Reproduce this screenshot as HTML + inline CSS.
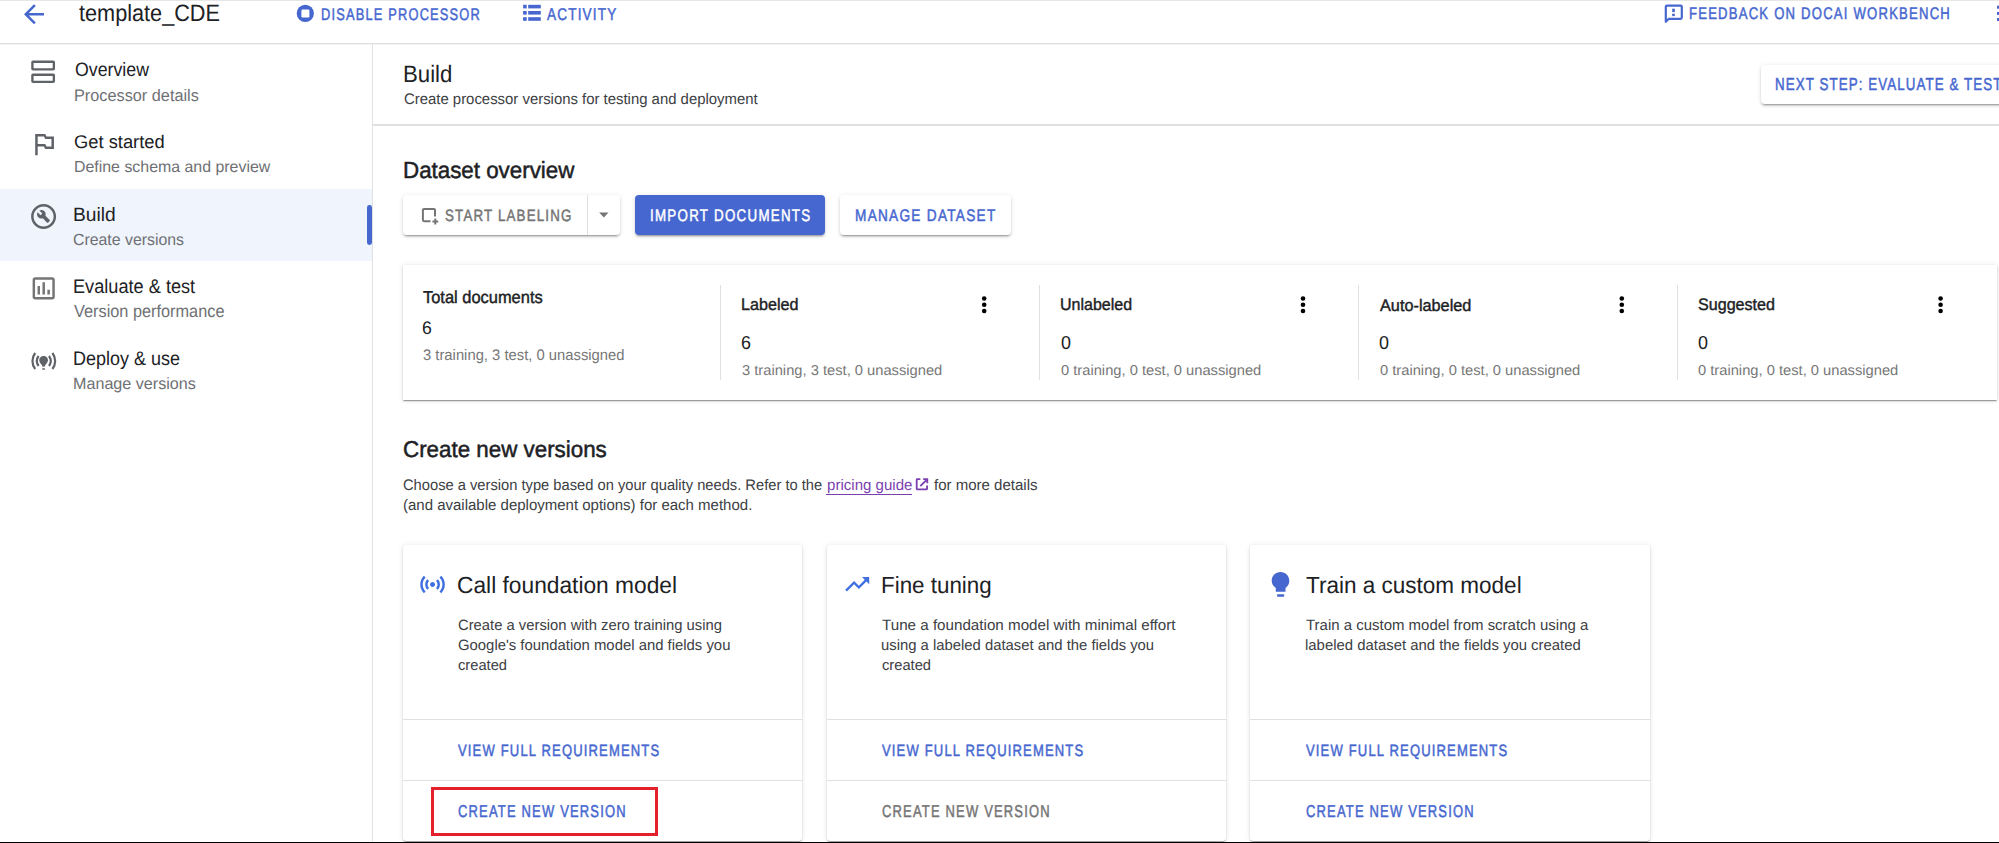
<!DOCTYPE html>
<html><head><meta charset="utf-8">
<style>
html,body{margin:0;padding:0;background:#fff;}
body{width:1999px;height:843px;overflow:hidden;position:relative;font-family:"Liberation Sans",sans-serif;}
.a{position:absolute;}
.t{position:absolute;white-space:nowrap;line-height:1;transform-origin:0 0;text-rendering:geometricPrecision;font-family:"Liberation Sans",sans-serif;}
.sh{box-shadow:0 2px 1px -1px rgba(0,0,0,.2),0 1px 1px 0 rgba(0,0,0,.14),0 1px 3px 0 rgba(0,0,0,.12),0 0 6px 0 rgba(0,0,0,.07);background:#fff;}
.bt{box-shadow:0 3px 1px -2px rgba(0,0,0,.2),0 2px 2px 0 rgba(0,0,0,.14),0 1px 5px 0 rgba(0,0,0,.12);background:#fff;}
svg{position:absolute;overflow:visible;}
</style></head><body>
<!-- header lines -->
<div class="a" style="left:0;top:0;width:1999px;height:1px;background:#e6e6e6"></div>
<div class="a" style="left:0;top:43px;width:1999px;height:1px;background:#dfdfdf"></div>
<div class="a" style="left:0;top:44px;width:1999px;height:1px;background:#f3f3f3"></div>
<!-- sidebar -->
<div class="a" style="left:0;top:189px;width:372px;height:72px;background:#f0f4fd"></div>
<div class="a" style="left:367px;top:205.4px;width:4.8px;height:39.8px;background:#4667d0;border-radius:2.4px"></div>
<div class="a" style="left:372px;top:44px;width:1px;height:799px;background:#e2e2e2"></div>
<div class="a" style="left:373px;top:124px;width:1626px;height:2px;background:#e0e0e0"></div>
<!-- next step button -->
<div class="a bt" style="left:1761px;top:65px;width:260px;height:39px;border-radius:4px"></div>
<!-- dataset buttons -->
<div class="a bt" style="left:403px;top:195px;width:217px;height:40px;border-radius:4px"></div>
<div class="a" style="left:587px;top:195px;width:1px;height:40px;background:#e0e0e0"></div>
<div class="a bt" style="left:635px;top:195px;width:190px;height:40px;border-radius:4px;background:#4667d0"></div>
<div class="a bt" style="left:840px;top:195px;width:171px;height:40px;border-radius:4px"></div>
<!-- stats card -->
<div class="a sh" style="left:403px;top:265px;width:1594px;height:135px;border-radius:0"></div>
<div class="a" style="left:720px;top:285px;width:1px;height:95px;background:#e0e0e0"></div>
<div class="a" style="left:1039px;top:285px;width:1px;height:95px;background:#e0e0e0"></div>
<div class="a" style="left:1358px;top:285px;width:1px;height:95px;background:#e0e0e0"></div>
<div class="a" style="left:1677px;top:285px;width:1px;height:95px;background:#e0e0e0"></div>
<!-- version cards -->
<div class="a sh" style="left:403px;top:545px;width:399px;height:296px;border-radius:3px"></div>
<div class="a sh" style="left:827px;top:545px;width:399px;height:296px;border-radius:3px"></div>
<div class="a sh" style="left:1250px;top:545px;width:400px;height:296px;border-radius:3px"></div>
<div class="a" style="left:403px;top:719px;width:399px;height:1px;background:#e0e0e0"></div>
<div class="a" style="left:403px;top:780px;width:399px;height:1px;background:#e0e0e0"></div>
<div class="a" style="left:827px;top:719px;width:399px;height:1px;background:#e0e0e0"></div>
<div class="a" style="left:827px;top:780px;width:399px;height:1px;background:#e0e0e0"></div>
<div class="a" style="left:1250px;top:719px;width:400px;height:1px;background:#e0e0e0"></div>
<div class="a" style="left:1250px;top:780px;width:400px;height:1px;background:#e0e0e0"></div>
<!-- red box -->
<div class="a" style="left:431px;top:787px;width:221px;height:43px;border:3px solid #e3202c"></div>
<!-- bottom black line -->
<div class="a" style="left:0;top:842px;width:1999px;height:1px;background:#000"></div>

<!-- ICONS -->
<svg width="1999" height="843" style="left:0;top:0" viewBox="0 0 1999 843">
  <!-- back arrow -->
  <path transform="translate(19 -0.8) scale(1.25)" fill="#4667d0" d="M20 11H7.83l5.59-5.59L12 4l-8 8 8 8 1.41-1.41L7.83 13H20v-2z"/>
  <!-- disable circle -->
  <circle cx="305.3" cy="13.4" r="8.6" fill="#4667d0"/><rect x="301.4" y="9.5" width="8" height="8" rx="1.2" fill="#fff"/>
  <!-- activity list -->
  <g fill="#4667d0">
    <rect x="523.1" y="4.8" width="3.6" height="3.6"/><rect x="528.2" y="4.8" width="12.6" height="3.6"/>
    <rect x="523.1" y="11" width="3.6" height="3.6"/><rect x="528.2" y="11" width="12.6" height="3.6"/>
    <rect x="523.1" y="17.2" width="3.6" height="3.6"/><rect x="528.2" y="17.2" width="12.6" height="3.6"/>
  </g>
  <!-- feedback -->
  <path d="M1665.8 21.8 V6.8 Q1665.8 5.6 1667 5.6 H1680.6 Q1681.8 5.6 1681.8 6.8 V17.6 Q1681.8 18.8 1680.6 18.8 H1668.8 Z" fill="none" stroke="#4667d0" stroke-width="2.2" stroke-linejoin="round"/>
  <rect x="1672.2" y="8.7" width="2.6" height="3.4" fill="#4667d0"/><rect x="1672.2" y="13.7" width="2.6" height="2.4" fill="#4667d0"/>
  <!-- header kebab -->
  <g fill="#4667d0"><rect x="1997" y="5.7" width="3" height="3"/><rect x="1997" y="11.9" width="3" height="3"/><rect x="1997" y="18" width="3" height="3"/></g>

  <!-- sidebar icons -->
  <g fill="none" stroke="#5f6368" stroke-width="2.35">
    <rect x="32.4" y="61.7" width="21.45" height="7.65" rx="0.6"/>
    <rect x="32.4" y="74.7" width="21.45" height="7.15" rx="0.6"/>
  </g>
  <path transform="translate(28.95 128.9) scale(1.25)" fill="#5f6368" d="M14 6l-1-2H5v17h2v-7h5l1 2h7V6h-6zm4 8h-4l-1-2H7V6h5l1 2h5v6z"/>
  <path transform="translate(28.6 201.5) scale(1.25)" fill="#5f6368" d="M12 2C6.48 2 2 6.48 2 12s4.48 10 10 10 10-4.48 10-10S17.52 2 12 2zm0 18c-4.41 0-8-3.590-8-8s3.59-8 8-8 8 3.59 8 8-3.59 8-8 8zM13.49 11.38c.43-1.22.17-2.640-.81-3.62-1.11-1.11-2.79-1.3-4.1-.59l2.35 2.35-1.41 1.41-2.35-2.35c-.71 1.32-.52 2.99.59 4.1.98.98 2.4 1.24 3.62.81l3.41 3.41c.2.2.51.2.71 0l1.4-1.4c.2-.2.2-.51 0-.71l-3.41-3.41z"/>
  <path transform="translate(28.9 273.6) scale(1.233)" fill="#757575" d="M19 3H5c-1.1 0-2 .9-2 2v14c0 1.1.9 2 2 2h14c1.1 0 2-.9 2-2V5c0-1.1-.9-2-2-2zm0 16H5V5h14v14zM7 10h2v7H7zm4-3h2v10h-2zm4 6h2v4h-2z"/>
  <g fill="none" stroke="#5f6368" stroke-width="2.2" stroke-linecap="butt">
    <path d="M35.2 353 A13 13 0 0 0 35.2 369"/>
    <path d="M38.6 356 A8.5 8.5 0 0 0 38.6 366"/>
    <path d="M52.4 353 A13 13 0 0 1 52.4 369"/>
    <path d="M49 356 A8.5 8.5 0 0 1 49 366"/>
  </g>
  <path d="M43.6 356 C46.2 356 48 357.9 48 360.3 C48 362.2 46.6 363.6 45.2 365.2 L44.6 366.7 H42.6 L42 365.2 C40.6 363.6 39.2 362.2 39.2 360.3 C39.2 357.9 41 356 43.6 356 Z" fill="#5f6368"/>
  <rect x="42.4" y="368.2" width="2.4" height="1.6" fill="#5f6368"/>

  <!-- start labeling icon -->
  <path d="M430.5 221.2 H424 Q422.9 221.2 422.9 220.1 V210.1 Q422.9 209 424 209 H433.9 Q435 209 435 210.1 V216.5" fill="none" stroke="#757575" stroke-width="2"/>
  <path d="M435.3 218.6 V224.4 M432.4 221.5 H438.2" fill="none" stroke="#757575" stroke-width="2"/>
  <path d="M599.2 212.4 H608.5 L603.85 217.5 Z" fill="#757575"/>

  <!-- stats kebabs -->
  <g fill="#000">
    <circle cx="984.2" cy="298.5" r="2.3"/><circle cx="984.2" cy="304.8" r="2.3"/><circle cx="984.2" cy="311" r="2.3"/>
    <circle cx="1303" cy="298.5" r="2.3"/><circle cx="1303" cy="304.8" r="2.3"/><circle cx="1303" cy="311" r="2.3"/>
    <circle cx="1621.8" cy="298.5" r="2.3"/><circle cx="1621.8" cy="304.8" r="2.3"/><circle cx="1621.8" cy="311" r="2.3"/>
    <circle cx="1940.6" cy="298.5" r="2.3"/><circle cx="1940.6" cy="304.8" r="2.3"/><circle cx="1940.6" cy="311" r="2.3"/>
  </g>

  <!-- external link -->
  <path d="M920.3 479.2 H917.2 Q916.7 479.2 916.7 479.7 V488.8 Q916.7 489.3 917.2 489.3 H926.6 Q927.1 489.3 927.1 488.8 V485.6" fill="none" stroke="#7b3fb0" stroke-width="1.8"/>
  <path d="M923.2 479.2 H927.3 V483.3 M927.1 479.4 L920.3 486.2" fill="none" stroke="#7b3fb0" stroke-width="1.8"/>

  <!-- card icons -->
  <path transform="translate(417.8 569.8) scale(1.23)" fill="#3f6fe0" d="M7.76 16.24C6.67 15.16 6 13.66 6 12s.67-3.16 1.76-4.24l1.42 1.42C8.45 9.9 8 10.9 8 12c0 1.1.45 2.1 1.17 2.830l-1.41 1.41zm8.48 0C17.33 15.16 18 13.66 18 12s-.67-3.16-1.76-4.24l-1.42 1.42C15.55 9.9 16 10.9 16 12c0 1.1-.45 2.1-1.17 2.83l1.41 1.41zM12 10c-1.1 0-2 .9-2 2s.9 2 2 2 2-.9 2-2-.9-2-2-2zm8 2c0 2.21-.9 4.21-2.35 5.65l1.42 1.42C20.88 17.26 22 14.76 22 12s-1.12-5.26-2.93-7.070l-1.42 1.42C19.1 7.79 20 9.79 20 12zM6.35 6.35L4.93 4.93C3.12 6.74 2 9.24 2 12s1.12 5.26 2.93 7.07l1.42-1.42C4.9 16.21 4 14.21 4 12s.9-4.21 2.35-5.65z"/>
  <path transform="translate(842.8 569.9) scale(1.2)" fill="#3f6fe0" d="M16 6l2.29 2.29-4.88 4.88-4-4L2 16.59 3.41 18l6-6 4 4 6.3-6.29L22 12V6z"/>
  <path d="M1280.5 572.1 C1285.5 572.1 1289.3 576 1289.3 580.8 C1289.3 583.8 1287.8 586.4 1285.5 588 V591.8 H1275.8 V588 C1273.4 586.4 1271.7 583.8 1271.7 580.8 C1271.7 576 1275.6 572.1 1280.5 572.1 Z" fill="#4667d0"/>
  <rect x="1277" y="594.2" width="7.3" height="2.6" rx="1" fill="#4667d0"/>
</svg>

<div class="t" style="left:78.50px;top:0px;line-height:26px;font-size:23.55px;color:#202124;transform:scaleX(0.9205)">template_CDE</div>
<div class="t" style="left:321.23px;top:5px;line-height:19px;font-size:16.72px;color:#4667d0;transform:scaleX(0.7687);letter-spacing:1.542px;-webkit-text-stroke:0.5px #4667d0">DISABLE PROCESSOR</div>
<div class="t" style="left:547.40px;top:5px;line-height:19px;font-size:17.01px;color:#4667d0;transform:scaleX(0.7972);letter-spacing:1.484px;-webkit-text-stroke:0.5px #4667d0">ACTIVITY</div>
<div class="t" style="left:1688.62px;top:4px;line-height:19px;font-size:16.86px;color:#4667d0;transform:scaleX(0.7785);letter-spacing:1.536px;-webkit-text-stroke:0.5px #4667d0">FEEDBACK ON DOCAI WORKBENCH</div>
<div class="t" style="left:74.50px;top:60px;line-height:21px;font-size:19.33px;color:#202124;transform:scaleX(0.9182)">Overview</div>
<div class="t" style="left:73.53px;top:86px;line-height:19px;font-size:16.72px;color:#6e7074;transform:scaleX(0.9743)">Processor details</div>
<div class="t" style="left:73.60px;top:131px;line-height:21px;font-size:18.46px;color:#202124;transform:scaleX(0.9939)">Get started</div>
<div class="t" style="left:73.61px;top:159px;line-height:17px;font-size:15.99px;color:#6e7074;transform:scaleX(0.9949)">Define schema and preview</div>
<div class="t" style="left:73.11px;top:205px;line-height:21px;font-size:19.33px;color:#202124;transform:scaleX(0.9944)">Build</div>
<div class="t" style="left:73.10px;top:231px;line-height:18px;font-size:16.28px;color:#6e7074;transform:scaleX(0.9747)">Create versions</div>
<div class="t" style="left:73.48px;top:276px;line-height:22px;font-size:19.77px;color:#202124;transform:scaleX(0.9188)">Evaluate &amp; test</div>
<div class="t" style="left:74.40px;top:301px;line-height:20px;font-size:17.44px;color:#6e7074;transform:scaleX(0.9351)">Version performance</div>
<div class="t" style="left:73.48px;top:348px;line-height:22px;font-size:19.62px;color:#202124;transform:scaleX(0.9177)">Deploy &amp; use</div>
<div class="t" style="left:73.41px;top:375px;line-height:18px;font-size:16.28px;color:#6e7074;transform:scaleX(0.9916)">Manage versions</div>
<div class="t" style="left:403.17px;top:61px;line-height:27px;font-size:23.76px;color:#202124;transform:scaleX(0.9347)">Build</div>
<div class="t" style="left:403.50px;top:91px;line-height:17px;font-size:15.26px;color:#3c4043;transform:scaleX(0.9771)">Create processor versions for testing and deployment</div>
<div class="t" style="left:1775.33px;top:74px;line-height:20px;font-size:17.30px;color:#4667d0;transform:scaleX(0.7724);letter-spacing:1.408px;-webkit-text-stroke:0.5px #4667d0">NEXT STEP: EVALUATE &amp; TEST</div>
<div class="t" style="left:403.04px;top:157px;line-height:26px;font-size:23.40px;color:#202124;transform:scaleX(0.9551);-webkit-text-stroke:0.5px #202124">Dataset overview</div>
<div class="t" style="left:445.00px;top:207px;line-height:18px;font-size:16.42px;color:#757575;transform:scaleX(0.8135);letter-spacing:1.430px;-webkit-text-stroke:0.5px #757575">START LABELING</div>
<div class="t" style="left:649.70px;top:206px;line-height:19px;font-size:16.72px;color:#ffffff;transform:scaleX(0.7984);letter-spacing:1.598px;-webkit-text-stroke:0.5px #ffffff">IMPORT DOCUMENTS</div>
<div class="t" style="left:855.38px;top:206px;line-height:19px;font-size:16.72px;color:#4667d0;transform:scaleX(0.8152);letter-spacing:1.577px;-webkit-text-stroke:0.5px #4667d0">MANAGE DATASET</div>
<div class="t" style="left:423.00px;top:287px;line-height:20px;font-size:17.30px;color:#202124;transform:scaleX(0.9509);-webkit-text-stroke:0.42px #202124">Total documents</div>
<div class="t" style="left:422.00px;top:318px;line-height:20px;font-size:18.17px;color:#202124;transform:scaleX(0.9700)">6</div>
<div class="t" style="left:423.00px;top:347px;line-height:17px;font-size:15.26px;color:#777777;transform:scaleX(0.9700)">3 training, 3 test, 0 unassigned</div>
<div class="t" style="left:741.23px;top:295px;line-height:19px;font-size:16.72px;color:#202124;transform:scaleX(0.9663);-webkit-text-stroke:0.42px #202124">Labeled</div>
<div class="t" style="left:741.00px;top:332px;line-height:21px;font-size:18.75px;color:#202124;transform:scaleX(0.9561)">6</div>
<div class="t" style="left:742.20px;top:363px;line-height:16px;font-size:14.39px;color:#777777;transform:scaleX(1.0230)">3 training, 3 test, 0 unassigned</div>
<div class="t" style="left:1059.94px;top:295px;line-height:19px;font-size:16.72px;color:#202124;transform:scaleX(0.9576);-webkit-text-stroke:0.42px #202124">Unlabeled</div>
<div class="t" style="left:1060.70px;top:332px;line-height:21px;font-size:18.75px;color:#202124;transform:scaleX(0.9561)">0</div>
<div class="t" style="left:1060.90px;top:363px;line-height:16px;font-size:14.39px;color:#777777;transform:scaleX(1.0230)">0 training, 0 test, 0 unassigned</div>
<div class="t" style="left:1379.60px;top:296px;line-height:19px;font-size:16.72px;color:#202124;transform:scaleX(0.9743);-webkit-text-stroke:0.42px #202124">Auto-labeled</div>
<div class="t" style="left:1379.40px;top:332px;line-height:21px;font-size:18.75px;color:#202124;transform:scaleX(0.9561)">0</div>
<div class="t" style="left:1379.60px;top:363px;line-height:16px;font-size:14.39px;color:#777777;transform:scaleX(1.0230)">0 training, 0 test, 0 unassigned</div>
<div class="t" style="left:1698.30px;top:295px;line-height:19px;font-size:16.72px;color:#202124;transform:scaleX(0.9638);-webkit-text-stroke:0.42px #202124">Suggested</div>
<div class="t" style="left:1698.10px;top:332px;line-height:21px;font-size:18.75px;color:#202124;transform:scaleX(0.9561)">0</div>
<div class="t" style="left:1698.30px;top:363px;line-height:16px;font-size:14.39px;color:#777777;transform:scaleX(1.0230)">0 training, 0 test, 0 unassigned</div>
<div class="t" style="left:403.43px;top:436px;line-height:26px;font-size:22.97px;color:#202124;transform:scaleX(0.9732);-webkit-text-stroke:0.5px #202124">Create new versions</div>
<div class="t" style="left:402.50px;top:477px;line-height:17px;font-size:15.26px;color:#3c4043;transform:scaleX(0.9638)">Choose a version type based on your quality needs. Refer to the</div>
<div class="t" style="left:826.80px;top:477px;line-height:17px;font-size:15.26px;color:#7b3fb0;transform:scaleX(0.9885)">pricing guide</div>
<div class="t" style="left:933.90px;top:477px;line-height:17px;font-size:15.26px;color:#3c4043;transform:scaleX(0.9851)">for more details</div>
<div class="t" style="left:402.50px;top:497px;line-height:17px;font-size:15.26px;color:#3c4043;transform:scaleX(0.9834)">(and available deployment options) for each method.</div>
<div class="t" style="left:457.43px;top:572px;line-height:26px;font-size:23.40px;color:#202124;transform:scaleX(0.9725)">Call foundation model</div>
<div class="t" style="left:458.40px;top:617px;line-height:17px;font-size:14.97px;color:#3c4043;transform:scaleX(0.9882)">Create a version with zero training using</div>
<div class="t" style="left:458.40px;top:637px;line-height:17px;font-size:14.97px;color:#3c4043;transform:scaleX(0.9937)">Google's foundation model and fields you</div>
<div class="t" style="left:458.40px;top:657px;line-height:17px;font-size:14.97px;color:#3c4043;transform:scaleX(0.9818)">created</div>
<div class="t" style="left:458.40px;top:742px;line-height:18px;font-size:16.42px;color:#4667d0;transform:scaleX(0.7945);letter-spacing:1.451px;-webkit-text-stroke:0.5px #4667d0">VIEW FULL REQUIREMENTS</div>
<div class="t" style="left:458.40px;top:801px;line-height:20px;font-size:17.15px;color:#4667d0;transform:scaleX(0.7575);letter-spacing:1.552px;-webkit-text-stroke:0.5px #4667d0">CREATE NEW VERSION</div>
<div class="t" style="left:881.04px;top:572px;line-height:26px;font-size:23.40px;color:#202124;transform:scaleX(0.9567)">Fine tuning</div>
<div class="t" style="left:882.00px;top:617px;line-height:17px;font-size:14.97px;color:#3c4043;transform:scaleX(1.0138)">Tune a foundation model with minimal effort</div>
<div class="t" style="left:881.00px;top:637px;line-height:17px;font-size:14.97px;color:#3c4043;transform:scaleX(0.9915)">using a labeled dataset and the fields you</div>
<div class="t" style="left:882.00px;top:657px;line-height:17px;font-size:14.97px;color:#3c4043;transform:scaleX(0.9818)">created</div>
<div class="t" style="left:882.00px;top:742px;line-height:18px;font-size:16.42px;color:#4667d0;transform:scaleX(0.7945);letter-spacing:1.451px;-webkit-text-stroke:0.5px #4667d0">VIEW FULL REQUIREMENTS</div>
<div class="t" style="left:882.00px;top:801px;line-height:20px;font-size:17.15px;color:#757575;transform:scaleX(0.7575);letter-spacing:1.552px;-webkit-text-stroke:0.5px #757575">CREATE NEW VERSION</div>
<div class="t" style="left:1306.20px;top:572px;line-height:26px;font-size:23.40px;color:#202124;transform:scaleX(0.9626)">Train a custom model</div>
<div class="t" style="left:1306.20px;top:617px;line-height:17px;font-size:14.97px;color:#3c4043;transform:scaleX(1.0001)">Train a custom model from scratch using a</div>
<div class="t" style="left:1305.20px;top:637px;line-height:17px;font-size:14.97px;color:#3c4043;transform:scaleX(0.9953)">labeled dataset and the fields you created</div>
<div class="t" style="left:1306.20px;top:742px;line-height:18px;font-size:16.42px;color:#4667d0;transform:scaleX(0.7945);letter-spacing:1.451px;-webkit-text-stroke:0.5px #4667d0">VIEW FULL REQUIREMENTS</div>
<div class="t" style="left:1306.20px;top:801px;line-height:20px;font-size:17.15px;color:#4667d0;transform:scaleX(0.7575);letter-spacing:1.552px;-webkit-text-stroke:0.5px #4667d0">CREATE NEW VERSION</div>
<!-- pricing link underline -->
<div class="a" style="left:826px;top:494px;width:86px;height:1px;background:#7b3fb0"></div>
</body></html>
